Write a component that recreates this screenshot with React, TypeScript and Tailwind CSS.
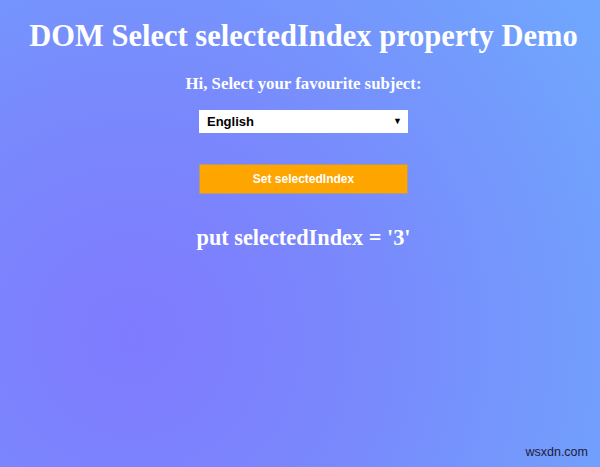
export default function App() {
  return (
    <div className="relative h-[467px] w-[600px] overflow-hidden bg-[radial-gradient(circle_at_22%_72%,#807bff_0%,#7a86fc_35%,#6fa8fd_100%)]">
      <div className="flex flex-col items-center pl-[7px] pt-[18px] font-['Liberation_Serif',serif] font-bold text-white">
        <h1 className="text-[30.5px] leading-[36px]">DOM Select selectedIndex property Demo</h1>
        <p className="mt-[20px] text-[16.8px] leading-[20px]">Hi, Select your favourite subject:</p>
        <div className="mt-[16px] flex h-[23px] w-[209px] items-center justify-between bg-white pl-[8px] pr-[6px] font-['Liberation_Sans',sans-serif] text-[13px] font-semibold text-black">
          <span>English</span>
          <span className="text-[9px]">▼</span>
        </div>
        <button className="mt-[31px] h-[30px] w-[209px] border border-[#b09a7a] bg-[#ffa500] font-['Liberation_Sans',sans-serif] text-[12px] font-bold text-white">
          Set selectedIndex
        </button>
        <p className="mt-[31px] text-[22.3px] leading-[25px]">put selectedIndex = &apos;3&apos;</p>
      </div>
      <span className="absolute bottom-[5px] right-[12px] font-['Liberation_Sans',sans-serif] text-[12.5px] text-[#1c1c3a]">
        wsxdn.com
      </span>
    </div>
  );
}
